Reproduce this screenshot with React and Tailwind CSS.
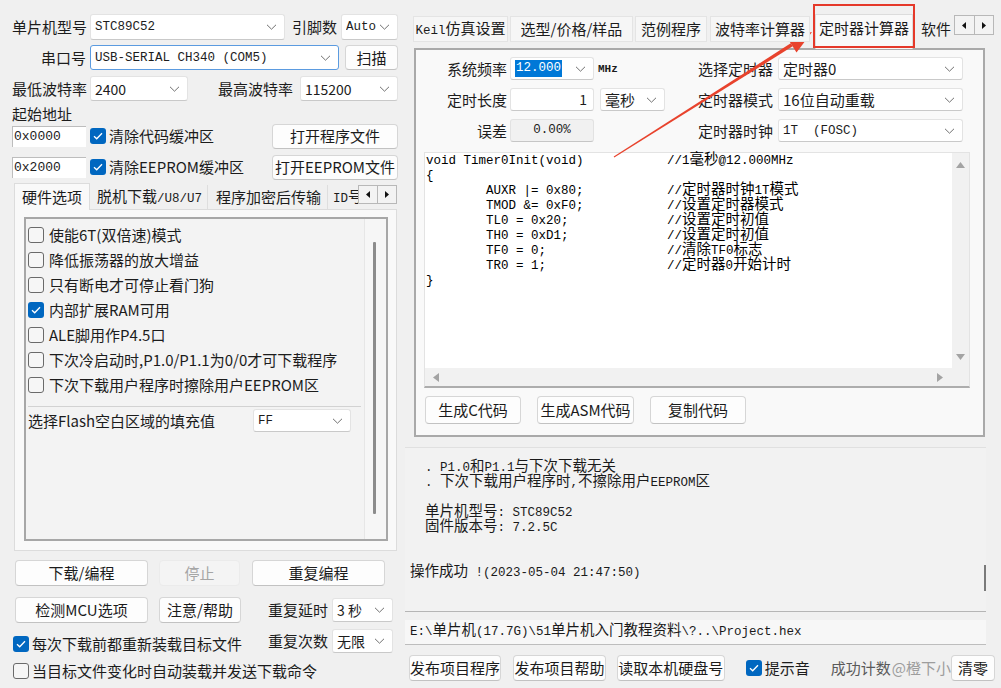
import React from "react";

const UI = "[font-family:Noto_Sans_CJK_SC,Noto_Sans,sans-serif]";
const MONO = "[font-family:Liberation_Mono,Noto_Sans_CJK_SC,monospace]";

function Mixed({ text }) {
  const parts = text.split(/([\u3000-\u303f\u4e00-\u9fff\uff00-\uffef]+)/);
  return parts.map((p, i) =>
    i % 2 ? (
      <span key={i} className={"text-[14.5px] leading-[0] " + UI}>
        {p}
      </span>
    ) : (
      <React.Fragment key={i}>{p}</React.Fragment>
    )
  );
}

function Chevron() {
  return (
    <svg width="11" height="6" viewBox="0 0 11 6" className="shrink-0">
      <path d="M1 0.8l4.5 4.4 4.5-4.4" fill="none" stroke="#707070" strokeWidth="1" />
    </svg>
  );
}

function Select({ className = "", textClass = "", focused = false, children }) {
  return (
    <div
      className={
        "flex items-center justify-between bg-white border rounded-[3px] pl-[4px] pr-[7px] " +
        (focused ? "border-[#5b9be0] " : "border-[#e3e3e3] border-b-[#c9c9c9] ") +
        className
      }
    >
      <span className={"whitespace-pre overflow-hidden " + textClass}>{children}</span>
      <Chevron />
    </div>
  );
}

function Btn({ className = "", disabled = false, children }) {
  return (
    <div
      className={
        "flex items-center justify-center rounded-[4px] border whitespace-nowrap " +
        (disabled
          ? "bg-[#f4f4f4] border-[#ebebeb] text-[#a5a5a5] "
          : "bg-[#fdfdfd] border-[#d6d6d6] border-b-[#c2c2c2] text-[#1b1b1b] ") +
        className
      }
    >
      {children}
    </div>
  );
}

function Check({ checked }) {
  return checked ? (
    <span className="w-[16px] h-[16px] rounded-[3px] bg-[#0067c0] flex items-center justify-center shrink-0">
      <svg width="10" height="8" viewBox="0 0 10 8">
        <path d="M1 4.2l2.7 2.6L9 1.2" fill="none" stroke="white" strokeWidth="1.3" />
      </svg>
    </span>
  ) : (
    <span className="w-[16px] h-[16px] rounded-[3px] border border-[#6a6a6a] bg-[#f6f6f6] shrink-0" />
  );
}

function TabArrows({ className = "" }) {
  return (
    <div className={"flex border border-[#b8b8b8] bg-[#f3f3f3] " + className}>
      <div className="flex-1 flex items-center justify-center border-r border-[#b8b8b8]">
        <svg width="4" height="7" viewBox="0 0 4 7">
          <path d="M4 0L0 3.5 4 7z" fill="#111" />
        </svg>
      </div>
      <div className="flex-1 flex items-center justify-center">
        <svg width="4" height="7" viewBox="0 0 4 7">
          <path d="M0 0L4 3.5 0 7z" fill="#111" />
        </svg>
      </div>
    </div>
  );
}

const options = [
  ["使能6T(双倍速)模式", false],
  ["降低振荡器的放大增益", false],
  ["只有断电才可停止看门狗", false],
  ["内部扩展RAM可用", true],
  ["ALE脚用作P4.5口", false],
  ["下次冷启动时,P1.0/P1.1为0/0才可下载程序", false],
  ["下次下载用户程序时擦除用户EEPROM区", false],
];

const code = [
  ["void Timer0Init(void)", "//1毫秒@12.000MHz"],
  ["{", ""],
  ["        AUXR |= 0x80;", "//定时器时钟1T模式"],
  ["        TMOD &= 0xF0;", "//设置定时器模式"],
  ["        TL0 = 0x20;", "//设置定时初值"],
  ["        TH0 = 0xD1;", "//设置定时初值"],
  ["        TF0 = 0;", "//清除TF0标志"],
  ["        TR0 = 1;", "//定时器0开始计时"],
  ["}", ""],
];

const log = [
  "  . P1.0和P1.1与下次下载无关",
  "  . 下次下载用户程序时,不擦除用户EEPROM区",
  "",
  "  单片机型号: STC89C52",
  "  固件版本号: 7.2.5C",
  "",
  "",
  "操作成功 !(2023-05-04 21:47:50)",
];

function LeftColumn() {
  return (
    <div className={"w-[405px] shrink-0 pl-[12px] pr-[7px] pt-[14px] text-[15px] leading-[20px] text-[#1c1c1c] " + UI}>
      <div className="flex items-center h-[26px]">
        <span className="w-[78px] whitespace-nowrap">单片机型号</span>
        <Select className="w-[195px] h-[26px]" textClass={MONO + " text-[12.5px]"}>STC89C52</Select>
        <span className="ml-[7px] w-[45px] whitespace-nowrap">引脚数</span>
        <Select className="ml-[4px] w-[57px] h-[26px] pr-[5px]" textClass={MONO + " text-[12.5px]"}>Auto</Select>
      </div>
      <div className="flex items-center h-[25px] mt-[5px]">
        <span className="w-[78px] text-right pr-[4px] whitespace-nowrap">串口号</span>
        <Select focused className="w-[249px] h-[25px]" textClass={MONO + " text-[12.5px]"}>
          USB-SERIAL CH340 (COM5)
        </Select>
        <Btn className="ml-[6px] w-[53px] h-[25px]">扫描</Btn>
      </div>
      <div className="flex items-center h-[25px] mt-[6px]">
        <span className="w-[78px] whitespace-nowrap">最低波特率</span>
        <Select className="w-[98px] h-[25px]" textClass="text-[14px]">2400</Select>
        <span className="ml-[30px] w-[82px] whitespace-nowrap">最高波特率</span>
        <Select className="w-[98px] h-[25px]" textClass="text-[14px]">115200</Select>
      </div>
      <div className="mt-[3px] h-[19px] flex items-end leading-[18px]">起始地址</div>
      <div className="flex items-center h-[26px]">
        <div className={"w-[74px] h-[21px] bg-white border-t border-l border-[#bdbdbd] pl-[1px] text-[13px] leading-[20px] " + MONO}>0x0000</div>
        <span className="ml-[4px]"><Check checked /></span>
        <span className="ml-[3px] flex-1 whitespace-nowrap">清除代码缓冲区</span>
        <Btn className="w-[126px] h-[25px]">打开程序文件</Btn>
      </div>
      <div className="flex items-center h-[26px] mt-[5px]">
        <div className={"w-[74px] h-[21px] bg-white border-t border-l border-[#bdbdbd] pl-[1px] text-[13px] leading-[20px] " + MONO}>0x2000</div>
        <span className="ml-[4px]"><Check checked /></span>
        <span className="ml-[3px] flex-1 whitespace-nowrap">清除EEPROM缓冲区</span>
        <Btn className="w-[126px] h-[25px]">打开EEPROM文件</Btn>
      </div>

      {/* tabs */}
      <div className="mt-[3px] ml-[2px] flex items-end h-[26px] relative z-10">
        <div className="w-[76px] h-[27px] -mb-px bg-[#f9f9f9] border border-b-0 border-[#dcdcdc] flex items-center justify-center">
          硬件选项
        </div>
        <div className="ml-[2px] w-[116px] h-[24px] border-r border-[#dedede] flex items-center justify-center whitespace-nowrap">
          <span>
            脱机下载<span className={"text-[12.5px] " + MONO}>/U8/U7</span>
          </span>
        </div>
        <div className="ml-[2px] w-[118px] h-[24px] border-r border-[#dedede] flex items-center justify-center whitespace-nowrap">
          程序加密后传输
        </div>
        <div className="ml-[2px] w-[28px] h-[24px] overflow-hidden flex items-center whitespace-nowrap pl-[3px]">
          <span>
            <span className={"text-[12.5px] " + MONO}>ID</span>号
          </span>
        </div>
        <TabArrows className="w-[39px] h-[19px] mb-[5px]" />
      </div>
      <div className="ml-[2px] w-[383px] h-[342px] bg-[#f9f9f9] border border-[#dcdcdc] pt-[7px] pl-[9px]">
        <div className="w-[364px] h-[324px] border-2 border-[#a7a7a7] bg-[#f3f3f3] flex">
          <div className="w-[338px] pt-[3px] pl-[2px]">
            {options.map(([t, c]) => (
              <div key={t} className="h-[25px] flex items-center">
                <Check checked={c} />
                <span className="ml-[5px] whitespace-nowrap">{t}</span>
              </div>
            ))}
            <div className="mt-[9px] h-px w-[333px] bg-[#d2d2d2]" />
            <div className="mt-[2px] h-[23px] flex items-center">
              <span className="w-[225px] whitespace-nowrap">选择Flash空白区域的填充值</span>
              <Select className="w-[98px] h-[23px]" textClass={MONO + " text-[12.5px]"}>FF</Select>
            </div>
          </div>
          <div className="flex-1 border-l border-[#e6e6e6] bg-[#f6f6f6]">
            <div className="ml-[8px] mt-[23px] w-[3px] h-[272px] bg-[#8c8c8c] rounded-[1px]" />
          </div>
        </div>
      </div>

      {/* bottom buttons */}
      <div className="mt-[9px] flex items-center h-[26px]">
        <Btn className="ml-[3px] w-[133px] h-[26px]">下载/编程</Btn>
        <Btn disabled className="ml-[11px] w-[81px] h-[26px]">停止</Btn>
        <Btn className="ml-[12px] w-[133px] h-[26px]">重复编程</Btn>
      </div>
      <div className="mt-[11px] flex items-center h-[26px]">
        <Btn className="ml-[3px] w-[133px] h-[26px]">检测MCU选项</Btn>
        <Btn className="ml-[11px] w-[82px] h-[26px]">注意/帮助</Btn>
        <span className="ml-[27px] w-[60px] whitespace-nowrap">重复延时</span>
        <Select className="ml-[4px] w-[61px] h-[24px]" textClass="text-[14px]">3 秒</Select>
      </div>
      <div className="mt-[5px] flex items-end h-[26px]">
        <div className="ml-[1px] w-[255px] h-[20px] flex items-center">
          <Check checked />
          <span className="ml-[3px] whitespace-nowrap">每次下载前都重新装载目标文件</span>
        </div>
        <div className="h-[26px] flex items-center">
          <span className="w-[60px] whitespace-nowrap">重复次数</span>
          <Select className="ml-[4px] w-[61px] h-[24px]" textClass="text-[14px]">无限</Select>
        </div>
      </div>
      <div className="mt-[7px] ml-[1px] h-[20px] flex items-center">
        <Check checked={false} />
        <span className="ml-[3px] whitespace-nowrap">当目标文件变化时自动装载并发送下载命令</span>
      </div>
    </div>
  );
}

function RightColumn() {
  return (
    <div className={"w-[596px] shrink-0 text-[15px] leading-[20px] text-[#1c1c1c] " + UI}>
      {/* tabs */}
      <div className="mt-[14px] h-[34px] ml-[8px] flex items-start relative z-10">
        <div className="mt-[2px] w-[95px] h-[26px] bg-[#f6f6f6] border border-[#e4e4e4] flex items-center justify-center whitespace-nowrap">
          <span>
            <span className={"text-[12.5px] " + MONO}>Keil</span>仿真设置
          </span>
        </div>
        <div className="mt-[2px] ml-[2px] w-[123px] h-[26px] bg-[#f6f6f6] border border-[#e4e4e4] flex items-center justify-center whitespace-nowrap">
          选型/价格/样品
        </div>
        <div className="mt-[2px] ml-[2px] w-[72px] h-[26px] bg-[#f6f6f6] border border-[#e4e4e4] flex items-center justify-center whitespace-nowrap">
          范例程序
        </div>
        <div className="mt-[2px] ml-[3px] w-[100px] h-[26px] bg-[#f6f6f6] border border-[#e4e4e4] flex items-center justify-center whitespace-nowrap">
          波特率计算器
        </div>
        <div className="relative ml-[5px] w-[98px] h-[35px] bg-[#f9f9f9] border border-b-0 border-[#dcdcdc] flex justify-center pt-[3px] whitespace-nowrap">
          定时器计算器
          <div className="absolute -left-[3px] -top-[11px] w-[102px] h-[44px] border-2 border-[#e5392a]" />
        </div>
        <div className="mt-[2px] ml-[4px] w-[37px] h-[26px] overflow-hidden flex items-center whitespace-nowrap pl-[4px]">
          软件
        </div>
        <TabArrows className="mt-[1px] w-[40px] h-[20px]" />
      </div>

      {/* panel */}
      <div className="ml-[9px] w-[571px] h-[389px] bg-[#f9f9f9] border-2 border-[#a9a9a9] pt-[7px]">
        <div className="flex flex-col gap-y-[8px]">
          <div className="flex items-center h-[23px]">
            <div className="w-[274px] flex items-center">
              <span className="w-[94px] text-right pr-[3px]">系统频率</span>
              <Select className="w-[84px] h-[23px] pl-[1px]" textClass={MONO + " text-[12.5px] bg-[#0078d7] text-white leading-[17px] px-px"}>12.000</Select>
              <span className={"ml-[4px] text-[11px] font-bold " + MONO}>MHz</span>
            </div>
            <span className="w-[88px] text-right pr-[5px] whitespace-nowrap">选择定时器</span>
            <Select className="w-[185px] h-[23px]">定时器0</Select>
          </div>
          <div className="flex items-center h-[23px]">
            <div className="w-[274px] flex items-center">
              <span className="w-[94px] text-right pr-[3px]">定时长度</span>
              <div className="w-[84px] h-[23px] bg-white border border-[#e3e3e3] border-b-[#c9c9c9] rounded-[3px] text-right pr-[6px] text-[14px] leading-[21px]">1</div>
              <Select className="ml-[6px] w-[65px] h-[23px]">毫秒</Select>
            </div>
            <span className="w-[88px] text-right pr-[5px] whitespace-nowrap">定时器模式</span>
            <Select className="w-[185px] h-[23px]">16位自动重载</Select>
          </div>
          <div className="flex items-center h-[23px]">
            <div className="w-[274px] flex items-center">
              <span className="w-[94px] text-right pr-[3px]">误差</span>
              <div className={"w-[84px] h-[23px] bg-[#f1f1f1] border border-[#e2e2e2] border-b-[#c6c6c6] rounded-[3px] text-center text-[12.5px] leading-[21px] " + MONO}>
                0.00%
              </div>
            </div>
            <span className="w-[88px] text-right pr-[5px] whitespace-nowrap">定时器时钟</span>
            <Select className="w-[185px] h-[23px]" textClass={MONO + " text-[12.5px]"}>1T  (FOSC)</Select>
          </div>
        </div>

        {/* code area */}
        <div className="mt-[10px] ml-[8px] w-[546px] h-[236px] border border-[#e3e3e3] border-b-2 border-b-[#adadad] flex flex-col">
          <div className="flex-1 flex min-h-0">
            <div className={"flex-1 bg-white pl-[1px] pt-[1px] text-[12.5px] leading-[15px] text-black " + MONO}>
              {code.map(([c, m], i) => (
                <div key={i} className="flex h-[15px]">
                  <span className="w-[241px] whitespace-pre shrink-0">{c}</span>
                  <span className="whitespace-pre">
                    <Mixed text={m} />
                  </span>
                </div>
              ))}
            </div>
            <div className="w-[17px] bg-[#f1f1f1] flex flex-col items-center justify-between pt-[9px] pb-[8px]">
              <svg width="9" height="6" viewBox="0 0 9 6">
                <path d="M4.5 0L9 6H0z" fill="#a3a3a3" />
              </svg>
              <svg width="9" height="6" viewBox="0 0 9 6">
                <path d="M0 0h9L4.5 6z" fill="#a3a3a3" />
              </svg>
            </div>
          </div>
          <div className="h-[18px] bg-[#f1f1f1] flex items-center justify-between pl-[8px] pr-[26px]">
            <svg width="6" height="9" viewBox="0 0 6 9">
              <path d="M6 0v9L0 4.5z" fill="#a3a3a3" />
            </svg>
            <svg width="6" height="9" viewBox="0 0 6 9">
              <path d="M0 0v9l6-4.5z" fill="#a3a3a3" />
            </svg>
          </div>
        </div>

        <div className="mt-[8px] ml-[9px] flex items-center">
          <Btn className="w-[96px] h-[28px]">生成C代码</Btn>
          <Btn className="ml-[16px] w-[97px] h-[28px]">生成ASM代码</Btn>
          <Btn className="ml-[16px] w-[96px] h-[28px]">复制代码</Btn>
        </div>
      </div>

      {/* log */}
      <div className="mt-[10px] w-[581px] h-[165px] border-t border-[#e0e0e0] border-b border-b-[#b5b5b5] bg-[#f2f2f2] flex">
        <div className={"flex-1 pl-[5px] pt-[13px] text-[12.5px] leading-[15px] text-[#1a1a1a] " + MONO}>
          {log.map((l, i) => (
            <div key={i} className="h-[15px] whitespace-pre">
              <Mixed text={l} />
            </div>
          ))}
        </div>
        <div className="w-[2px]">
          <div className="mt-[117px] w-[2px] h-[26px] bg-[#7a7a7a]" />
        </div>
      </div>

      {/* path */}
      <div className={"mt-[8px] w-[581px] h-[25px] bg-[#f7f7f7] border-b border-[#bdbdbd] pl-[5px] text-[12.5px] leading-[24px] text-[#1a1a1a] whitespace-pre " + MONO}>
        <Mixed text={"E:\\单片机(17.7G)\\51单片机入门教程资料\\?..\\Project.hex"} />
      </div>

      {/* bottom row */}
      <div className="mt-[10px] flex items-center h-[26px]">
        <Btn className="ml-[4px] w-[94px] h-[26px]">发布项目程序</Btn>
        <Btn className="ml-[12px] w-[95px] h-[26px]">发布项目帮助</Btn>
        <Btn className="ml-[11px] w-[110px] h-[26px]">读取本机硬盘号</Btn>
        <span className="ml-[21px]"><Check checked /></span>
        <span className="ml-[3px] whitespace-nowrap">提示音</span>
        <span className="ml-[21px] whitespace-nowrap text-[#5a5a5a]">成功计数</span>
        <span className="ml-[1px] whitespace-nowrap text-[#9d9d9d]">@橙下小</span>
        <Btn className="ml-auto mr-[6px] w-[45px] h-[26px]">清零</Btn>
      </div>
    </div>
  );
}

export default function App() {
  return (
    <div className="relative w-[1001px] h-[688px] overflow-hidden bg-[#f0f0f0] flex">
      <LeftColumn />
      <RightColumn />
      <svg className="absolute inset-0 pointer-events-none" width="1001" height="688" viewBox="0 0 1001 688">
        <polygon
          points="614.3,157.4 613.7,156.6 790.7,43.3 792.7,46.3"
          fill="#e8432d"
        />
        <polygon points="812,32 796.5,52.4 786.9,37.2" fill="#e8432d" />
      </svg>
    </div>
  );
}
